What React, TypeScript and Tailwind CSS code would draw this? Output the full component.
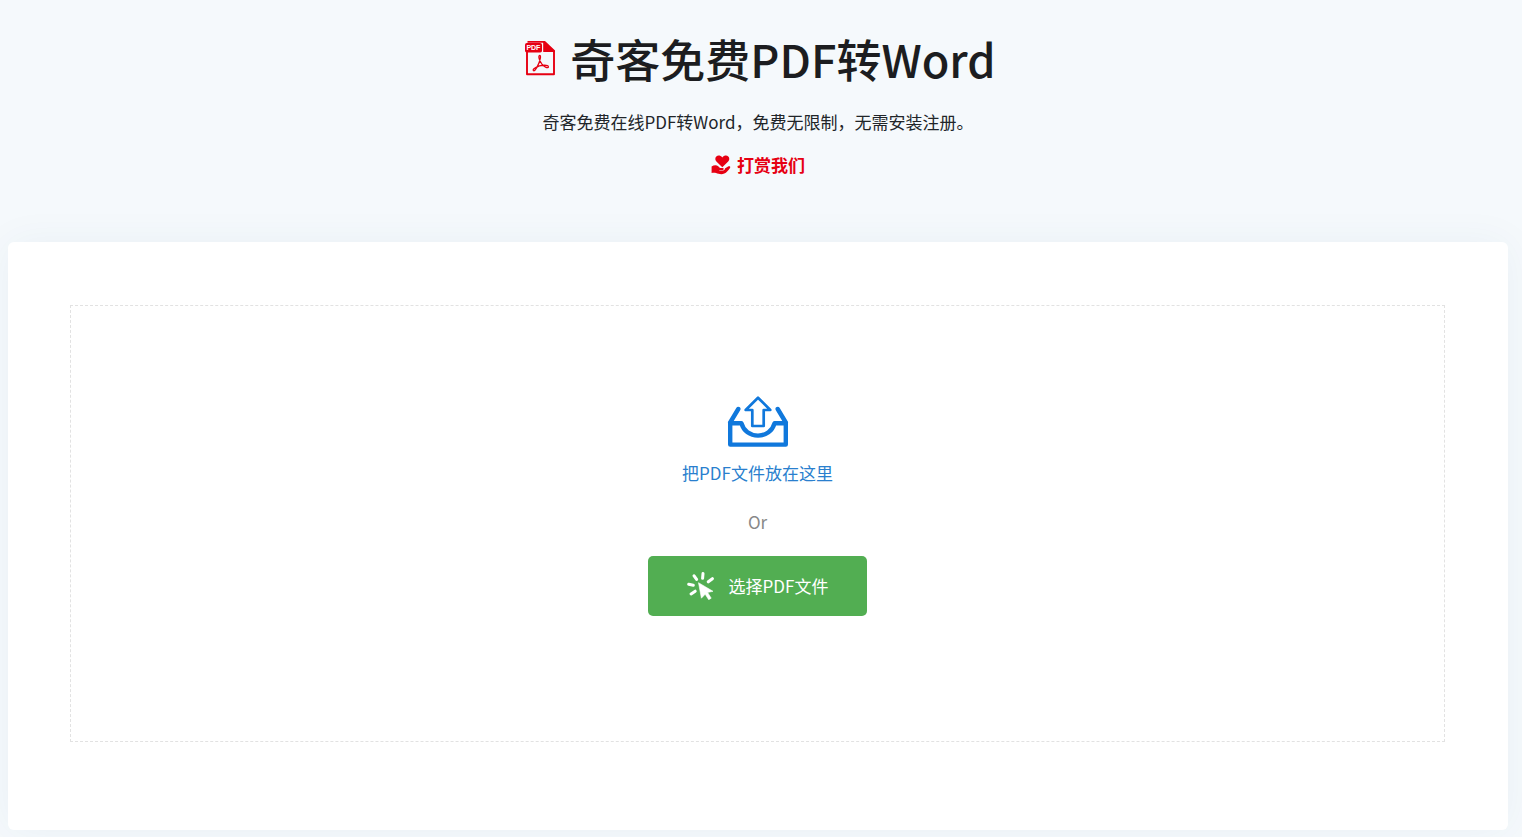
import React, { useRef } from 'react'

const PdfIcon = () => (
  <svg className="mb-0.5 h-9 w-8" viewBox="0 0 32 36" fill="none" aria-hidden="true">
    <path d="M3 12V34.200H30V11.500L19.800 1.900H3.500" stroke="#e60012" strokeWidth="1.900" strokeLinejoin="round" />
    <path d="M19.200 1H21L31 10.600V12H19.200Z" fill="#e60012" />
    <rect x="1" y="3" width="17" height="9.500" rx="1.800" fill="#e60012" />
    <text x="9.400" y="10.300" fill="#fff" fontSize="7" fontWeight="700" textAnchor="middle" fontFamily="Liberation Sans, sans-serif">PDF</text>
    <path
      d="M15.700 15.400c-1 0-1 1.700-.4 3.700 1.100 3.300 3.500 6.500 6.300 8 1.600.8 2.700.6 2.800-.2.100-1.100-1.500-1.700-3.800-1.700-3.400 0-7.300 1.200-9.700 2.900-1.400.9-2.100 1.900-1.500 2.500.8.800 2.100-.7 3.300-2.800 1.800-3.100 3.300-7.100 3.700-9.900.2-1.600 0-2.500-.7-2.500Z"
      stroke="#e60012"
      strokeWidth="1.300"
      strokeLinejoin="round"
    />
  </svg>
)

const DonateIcon = () => (
  <svg className="h-5 w-5" viewBox="0 0 20 20" fill="#e60012" aria-hidden="true">
    <path d="M11.300 12.300 5.400 6.500C3.900 5 4 2.500 5.300 1.400c1.700-1.400 4.300-1 6 1 1.700-2 4.300-2.400 6-1 1.300 1.100 1.400 3.600-.1 5.100Z" />
    <path d="M.6 11.500C3 9.800 5.600 9.700 7.500 11.400L9 12.900H11.400C13.200 12.900 13.300 14.700 11.700 14.900L8.300 15V15.500L12.300 15.400C13.500 15.300 14 14.400 13.900 13.600L16.700 11.800C18.500 10.800 19.900 11.600 19 12.900 17.400 15.300 15.500 17.600 13.300 18.600 10.500 19.800 7.500 18.900 5 18 3.500 17.500 2 17.700.6 18Z" />
  </svg>
)

const UploadIcon = () => (
  <svg className="h-[52px] w-[62px]" viewBox="0 0 62 52" fill="none" stroke="#1078dc" aria-hidden="true">
    <path d="M3.200 28.200V49.600H58.800V28.200H47.500C45.500 36 39 40.600 31 40.600S16.500 36 14.500 28.200Z" strokeWidth="4.400" strokeLinejoin="round" />
    <path d="M3.200 27.500 11.300 14M58.800 27.500 50.700 14" strokeWidth="4.400" strokeLinecap="round" />
    <path d="M31 2.700 18.700 15H25.300V31H36.700V15H43.300Z" strokeWidth="2.700" strokeLinejoin="round" />
  </svg>
)

const ClickIcon = () => (
  <svg className="h-7 w-7" viewBox="0 0 28 28" fill="none" aria-hidden="true">
    <path
      d="M16 1.600 15.600 6.300M7.100 3.800 9.600 7.400M1.700 12.300 6.300 13.200M4.100 21.900 8.200 19.200M25.400 6.700 21.300 9.800"
      stroke="#fff"
      strokeWidth="3"
      strokeLinecap="round"
    />
    <path d="M11.500 10.700 26 19.300 20.600 20.400 24.200 26.200 21.700 27.700 18.200 22.200 14.400 26.200Z" fill="#fff" stroke="#fff" strokeWidth=".6" strokeLinejoin="round" />
  </svg>
)

const App = () => {
  const fileRef = useRef<HTMLInputElement>(null)

  const handleSelect = () => {
    fileRef.current?.click()
  }

  return (
    <div className="min-h-screen bg-[#f5f9fc] pt-[29px] pr-[14px] pb-[7px] pl-2 font-['Noto_Sans_CJK_SC',sans-serif] text-[17px] leading-[26px] text-[#212529]">
      <header className="flex flex-col items-center text-center">
        <div className="flex items-center gap-[14px] pl-1">
          <PdfIcon />
          <h1 className="text-[45px] leading-[60px] font-medium text-[#1c1d20]">奇客免费PDF转Word</h1>
        </div>
        <p className="mt-5">奇客免费在线PDF转Word，免费无限制，无需安装注册。</p>
        <a href="#donate" className="mt-[17px] flex items-center gap-[6px] font-bold text-[#e60012]">
          <DonateIcon />
          打赏我们
        </a>
      </header>

      <main className="mt-16 rounded-md bg-white pt-[63px] pr-[63px] pb-[88px] pl-[62px] shadow-[0_0_40px_rgba(40,80,110,0.05)]">
        <div className="flex flex-col items-center border border-dashed border-[#e2e2e2] pt-[89px] pb-[125px]">
          <UploadIcon />
          <p className="mt-[13px] text-[#2a7fce]">把PDF文件放在这里</p>
          <p className="mt-[23px] text-[#888888]">Or</p>
          <input ref={fileRef} type="file" accept=".pdf" className="hidden" aria-label="选择PDF文件" />
          <button
            type="button"
            onClick={handleSelect}
            className="mt-[21px] flex h-[60px] cursor-pointer items-center gap-[14px] rounded-[5px] bg-[#52ae52] px-[39px] text-white"
          >
            <ClickIcon />
            选择PDF文件
          </button>
        </div>
      </main>
    </div>
  )
}

export default App
